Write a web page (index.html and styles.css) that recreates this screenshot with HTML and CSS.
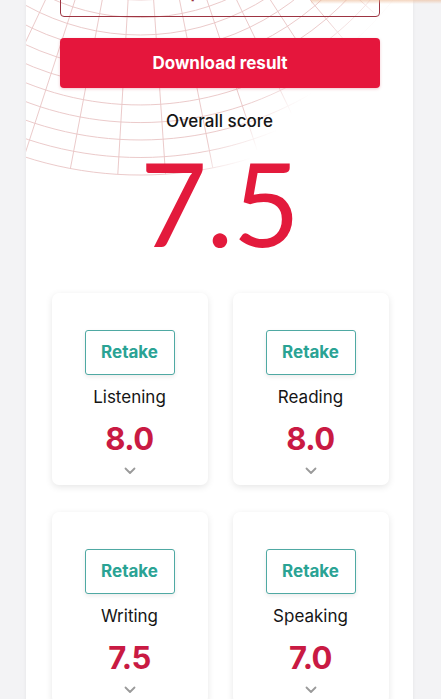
FILE: index.html
```html
<!DOCTYPE html>
<html lang="en">
<head>
<meta charset="utf-8">
<title>Overall score</title>
<link rel="stylesheet" href="styles.css">
</head>
<body>
<div class="topglow"></div>
<main class="panel">
  <svg class="pattern" width="387" height="200" viewBox="26 0 387 200" aria-hidden="true">
    <defs>
      <linearGradient id="fade" gradientUnits="userSpaceOnUse" x1="280" y1="67" x2="310" y2="95">
        <stop offset="0" stop-color="#fff" stop-opacity="1"/>
        <stop offset="1" stop-color="#fff" stop-opacity="0"/>
      </linearGradient>
      <mask id="m" maskUnits="userSpaceOnUse" x="0" y="0" width="441" height="200"><rect x="0" y="0" width="441" height="200" fill="url(#fade)"/></mask>
    </defs>
    <g id="grid" mask="url(#m)" fill="none" stroke="#e9c4c4" stroke-width="0.9"></g>
  </svg>
  <div class="content">
    <button class="btn-outline">Compare results</button>
    <button class="btn-primary">Download result</button>
    <h2 class="overall-label">Overall score</h2>
    <div class="overall-value">7.5</div>
    <section class="cards">
      <div class="card">
        <button class="btn-retake">Retake</button>
        <div class="skill">Listening</div>
        <div class="score">8.0</div>
        <svg class="chev" width="12" height="8" viewBox="0 0 12 8"><path d="M1.5 1.5 L6 6 L10.5 1.5" /></svg>
      </div>
      <div class="card">
        <button class="btn-retake">Retake</button>
        <div class="skill">Reading</div>
        <div class="score">8.0</div>
        <svg class="chev" width="12" height="8" viewBox="0 0 12 8"><path d="M1.5 1.5 L6 6 L10.5 1.5" /></svg>
      </div>
      <div class="card">
        <button class="btn-retake">Retake</button>
        <div class="skill">Writing</div>
        <div class="score">7.5</div>
        <svg class="chev" width="12" height="8" viewBox="0 0 12 8"><path d="M1.5 1.5 L6 6 L10.5 1.5" /></svg>
      </div>
      <div class="card">
        <button class="btn-retake">Retake</button>
        <div class="skill">Speaking</div>
        <div class="score">7.0</div>
        <svg class="chev" width="12" height="8" viewBox="0 0 12 8"><path d="M1.5 1.5 L6 6 L10.5 1.5" /></svg>
      </div>
    </section>
  </div>
</main>
<script>
(function(){
  var g = document.getElementById('grid');
  var cx = 140, cy = -200, ns = 'http://www.w3.org/2000/svg';
  var r0 = 200, r1 = 375, a0 = 35, a1 = 152;
  function pt(r, a){ var t = a * Math.PI / 180; return [cx + r * Math.cos(t), cy + r * Math.sin(t)]; }
  var d = '';
  for (var r = r0; r <= r1; r += 17.5) {
    var p = pt(r, a0), q = pt(r, a1);
    d += 'M' + p[0].toFixed(1) + ' ' + p[1].toFixed(1) + ' A' + r + ' ' + r + ' 0 0 1 ' + q[0].toFixed(1) + ' ' + q[1].toFixed(1) + ' ';
  }
  for (var a = a0; a <= a1; a += 7.3) {
    var p2 = pt(r0, a), q2 = pt(r1, a);
    d += 'M' + p2[0].toFixed(1) + ' ' + p2[1].toFixed(1) + ' L' + q2[0].toFixed(1) + ' ' + q2[1].toFixed(1) + ' ';
  }
  var path = document.createElementNS(ns, 'path');
  path.setAttribute('d', d);
  g.appendChild(path);
})();
</script>
</body>
</html>
```
FILE: styles.css
```css
html, body {
  margin: 0;
  padding: 0;
  overflow: hidden;
}
body {
  background: #f3f3f5;
  font-family: Inter, Lato, "Open Sans", Arial, sans-serif;
  color: #1a1a1a;
  min-height: 699px;
}
.topglow {
  position: absolute;
  top: 0;
  right: 0;
  width: 130px;
  height: 4px;
  background: linear-gradient(to bottom, rgba(235, 180, 140, 0.55), rgba(235, 180, 140, 0));
  z-index: 3;
}
.panel {
  position: relative;
  margin-left: 26px;
  width: 387px;
  min-height: 760px;
  background: #fff;
  box-shadow: 0 0 4px rgba(0, 0, 0, 0.06);
  overflow: hidden;
}
.pattern {
  position: absolute;
  left: 0;
  top: 0;
  z-index: 0;
  pointer-events: none;
}
.content {
  position: relative;
  z-index: 1;
  display: flex;
  flex-direction: column;
  align-items: center;
}
.btn-outline {
  width: 320px;
  height: 50px;
  margin-top: -33px;
  margin-left: 1px;
  border: 1.5px solid #9d3442;
  border-radius: 4px;
  background: transparent;
  font-family: inherit;
  font-size: 17px;
  font-weight: 600;
  color: #9d3442;
  box-sizing: border-box;
}
.btn-primary {
  width: 320px;
  height: 50px;
  margin-top: 21px;
  margin-left: 1px;
  border: none;
  border-radius: 4px;
  background: #e5163c;
  color: #fff;
  font-family: inherit;
  font-size: 17px;
  font-weight: 700;
  box-shadow: 0 1px 3px rgba(200, 20, 50, 0.25);
}
.overall-label {
  margin: 21px 0 0;
  font-size: 17px;
  line-height: 24px;
  font-weight: 500;
  color: #151515;
}
.overall-value {
  margin-top: 12px;
  font-family: Lato, Inter, sans-serif;
  font-size: 116px;
  line-height: 116px;
  font-weight: 400;
  color: #e31a3c;
  letter-spacing: -1px;
}
.cards {
  margin-top: 32px;
  display: grid;
  grid-template-columns: 156px 156px;
  column-gap: 25px;
  row-gap: 27px;
  margin-left: 1px;
}
.card {
  background: #fff;
  border-radius: 7px;
  box-shadow: 0 2px 7px rgba(0, 0, 0, 0.1);
  padding: 37px 0 10px;
  display: flex;
  flex-direction: column;
  align-items: center;
}
.btn-retake {
  width: 90px;
  height: 45px;
  box-sizing: border-box;
  border: 1.5px solid #4fa9a3;
  border-radius: 3px;
  background: #fff;
  color: #2aa394;
  font-family: inherit;
  font-size: 17px;
  font-weight: 700;
  padding: 0 0 1px;
  box-shadow: 0 2px 4px rgba(0, 0, 0, 0.08);
}
.skill {
  margin-top: 10px;
  font-size: 17px;
  line-height: 24px;
  font-weight: 400;
  color: #151515;
}
.score {
  margin-top: 12px;
  font-size: 31px;
  line-height: 36px;
  font-weight: 700;
  color: #c91a43;
  letter-spacing: -0.5px;
}
.chev {
  margin-top: 10px;
  display: block;
}
.chev path {
  fill: none;
  stroke: #9a9a9a;
  stroke-width: 1.8;
  stroke-linecap: round;
  stroke-linejoin: round;
}
```
